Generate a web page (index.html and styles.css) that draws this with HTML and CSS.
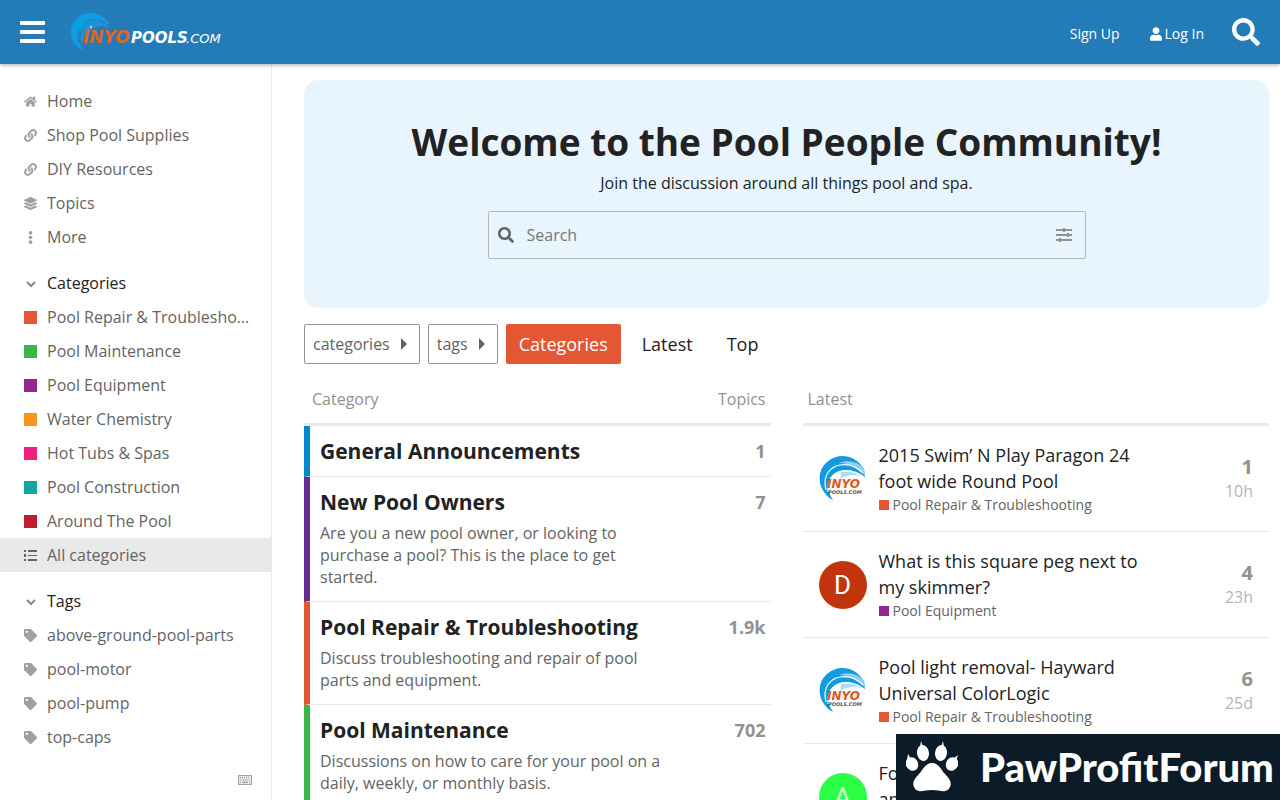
FILE: index.html
```html
<!DOCTYPE html>
<html lang="en">
    <head>
        <meta charset="utf-8">
        <meta name="viewport" content="width=device-width, initial-scale=1">
        <title>Pool People Community</title>
        <link rel="stylesheet" href="styles.css">
    </head>
    <body>
        <svg class="sprite" aria-hidden="true">
            <symbol id="search" viewBox="0 0 512 512"><path d="M505 442.7L405.3 343c-4.5-4.5-10.6-7-17-7H372c27.6-35.3 44-79.7 44-128C416 93.1 322.9 0 208 0S0 93.1 0 208s93.1 208 208 208c48.3 0 92.7-16.4 128-44v16.3c0 6.4 2.5 12.5 7 17l99.7 99.7c9.4 9.4 24.6 9.4 33.9 0l28.3-28.3c9.4-9.4 9.4-24.6.1-34zM208 336c-70.7 0-128-57.2-128-128 0-70.7 57.2-128 128-128 70.7 0 128 57.2 128 128 0 70.7-57.2 128-128 128z"/></symbol>
            <symbol id="user" viewBox="0 0 448 512"><path d="M224 256c70.7 0 128-57.3 128-128S294.7 0 224 0 96 57.3 96 128s57.3 128 128 128zm89.6 32h-16.7c-22.2 10.2-46.9 16-72.9 16s-50.6-5.8-72.9-16h-16.7C60.2 288 0 348.2 0 422.4V464c0 26.5 21.5 48 48 48h352c26.5 0 48-21.5 48-48v-41.6c0-74.2-60.2-134.4-134.4-134.4z"/></symbol>
            <symbol id="bars" viewBox="0 0 26 24"><rect y="1" width="25" height="4" rx="1"/><rect y="10" width="25" height="4" rx="1"/><rect y="19" width="25" height="4" rx="1"/></symbol>
            <symbol id="home" viewBox="0 0 576 512"><path d="M280.37 148.26L96 300.11V464a16 16 0 0 0 16 16l112.06-.29a16 16 0 0 0 15.92-16V368a16 16 0 0 1 16-16h64a16 16 0 0 1 16 16v95.64a16 16 0 0 0 16 16.05L464 480a16 16 0 0 0 16-16V300L295.67 148.26a12.19 12.19 0 0 0-15.3 0zM571.6 251.47L488 182.56V44.05a12 12 0 0 0-12-12h-56a12 12 0 0 0-12 12v72.61L318.47 43a48 48 0 0 0-61 0L4.34 251.47a12 12 0 0 0-1.6 16.9l25.5 31A12 12 0 0 0 45.15 301l235.22-193.74a12.19 12.19 0 0 1 15.3 0L530.9 301a12 12 0 0 0 16.9-1.6l25.5-31a12 12 0 0 0-1.7-16.93z"/></symbol>
            <symbol id="link" viewBox="0 0 512 512"><path d="M326.612 185.391c59.747 59.809 58.927 155.698.36 214.59-.11.12-.24.25-.36.37l-67.2 67.2c-59.27 59.27-155.699 59.262-214.96 0-59.27-59.26-59.27-155.7 0-214.96l37.106-37.106c9.84-9.84 26.786-3.3 27.294 10.606.648 17.722 3.826 35.527 9.69 52.721 1.986 5.822.567 12.262-3.783 16.612l-13.087 13.087c-28.026 28.026-28.905 73.66-1.155 101.96 28.024 28.579 74.086 28.749 102.325.51l67.2-67.19c28.191-28.191 28.073-73.757 0-101.83-3.701-3.694-7.429-6.564-10.341-8.569a16.037 16.037 0 0 1-6.947-12.606c-.396-10.567 3.348-21.456 11.698-29.806l21.054-21.055c5.521-5.521 14.182-6.199 20.584-1.731a152.482 152.482 0 0 1 20.522 17.197zM467.547 44.449c-59.261-59.262-155.69-59.27-214.96 0l-67.2 67.2c-.12.12-.25.25-.36.37-58.566 58.892-59.387 154.781.36 214.59a152.454 152.454 0 0 0 20.521 17.196c6.402 4.468 15.064 3.789 20.584-1.731l21.054-21.055c8.35-8.35 12.094-19.239 11.698-29.806a16.037 16.037 0 0 0-6.947-12.606c-2.912-2.005-6.64-4.875-10.341-8.569-28.073-28.073-28.191-73.639 0-101.83l67.2-67.19c28.239-28.239 74.3-28.069 102.325.51 27.75 28.3 26.872 73.934-1.155 101.96l-13.087 13.087c-4.35 4.35-5.769 10.79-3.783 16.612 5.864 17.194 9.042 34.999 9.69 52.721.509 13.906 17.454 20.446 27.294 10.606l37.106-37.106c59.271-59.259 59.271-155.699.001-214.959z"/></symbol>
            <symbol id="layers" viewBox="0 0 512 512"><path d="M12.41 148.02l232.94 105.67c6.8 3.09 14.49 3.09 21.29 0l232.94-105.67c16.55-7.51 16.55-32.52 0-40.03L266.65 2.31a25.607 25.607 0 0 0-21.29 0L12.41 107.98c-16.55 7.51-16.55 32.53 0 40.04zm487.18 88.28l-58.09-26.33-161.64 73.27c-7.56 3.43-15.59 5.17-23.86 5.17s-16.29-1.74-23.86-5.17L70.51 209.97l-58.1 26.33c-16.55 7.5-16.55 32.5 0 40l232.94 105.59c6.8 3.08 14.49 3.08 21.29 0L499.59 276.3c16.55-7.5 16.55-32.5 0-40zm0 127.8l-57.87-26.23-161.86 73.37c-7.56 3.43-15.59 5.17-23.86 5.17s-16.29-1.74-23.86-5.17L70.29 337.87 12.41 364.1c-16.55 7.5-16.55 32.5 0 40l232.94 105.59c6.8 3.08 14.49 3.08 21.29 0L499.59 404.1c16.55-7.5 16.55-32.5 0-40z"/></symbol>
            <symbol id="dots" viewBox="0 0 512 512"><circle cx="256" cy="72" r="72"/><circle cx="256" cy="256" r="72"/><circle cx="256" cy="440" r="72"/></symbol>
            <symbol id="chevron" viewBox="0 0 13 13"><path d="M3 5l4 4 4-4" fill="none" stroke="currentColor" stroke-width="2"/></symbol>
            <symbol id="list" viewBox="0 0 13 13"><path d="M0 1h2v2H0zM0 5h2v3H0zM0 10h2v2H0zM4 1h9v2H4zM4 6h9v1H4zM4 10h9v2H4z"/></symbol>
            <symbol id="tag" viewBox="0 0 512 512"><path d="M0 252.118V48C0 21.49 21.49 0 48 0h204.118a48 48 0 0 1 33.941 14.059l211.882 211.882c18.745 18.745 18.745 49.137 0 67.882L293.823 497.941c-18.745 18.745-49.137 18.745-67.882 0L14.059 286.059A48 48 0 0 1 0 252.118zM112 64c-26.51 0-48 21.49-48 48s21.49 48 48 48 48-21.49 48-48-21.49-48-48-48z"/></symbol>
            <symbol id="keyboard" viewBox="0 0 14 10"><rect x=".5" y=".5" width="13" height="9" rx="1" fill="none" stroke="currentColor" stroke-width="1.4"/><path d="M2 2.7h10M2.5 4.9h9" fill="none" stroke="currentColor" stroke-width="1.5" stroke-dasharray="1.3 .7"/><path d="M2 6.6h1v1.4H2zM4 6.6h6V8H4zM11 6.6h1V8h-1z"/></symbol>
            <symbol id="sliders" viewBox="0 0 16 16"><path d="M0 2h16v2H0zM0 7h16v2H0zM0 12h16v2H0zM7 1h2v4H7zM11 6h2v4h-2zM3 11h2v4H3z"/></symbol>
            <symbol id="caret" viewBox="0 0 14 14"><path d="M4 1l6 6-6 6z"/></symbol>
            <symbol id="wave" viewBox="0 0 48 48">
                <path d="M14 45C-1 37-4 17 8 7 20-3 36 0 45 14l1 8C35 13 20 13 14 20 7 27 8 36 14 45z" fill="#129be0"/>
                <path d="M20 8c9-4 20-1 25 6l1 7C39 12 29 8 20 8z" fill="#8fd0f2"/>
                <path d="M22 17c8-3 17-1 23 5-8-3-17-3-24 2z" fill="#a9dbf5"/>
                <path d="M7 35C4 24 8 15 17 11c9-3 19-1 27 7M9 37c-1-10 3-17 11-20 8-2 17 0 24 5M11 36c1-8 5-13 11-15" fill="none" stroke="#fff" stroke-width="1.2"/>
            </symbol>
        </svg>

        <header class="header">
            <button class="menu" aria-label="Menu"><svg><use href="#bars"/></svg></button>
            <a class="logo" href="#" aria-label="Inyo Pools">
                <svg viewBox="0 0 152 40">
                    <path d="M13 39C-4 31-4 12 9 4c10-6 22-4 30 9C29 8 18 9 12 16 6 23 7 31 13 39z" fill="#0c9de2"/>
                    <path d="M11 33C7 23 12 14 20 11c8-2 14 0 19 5-8-3-15-2-20 3-5 4-7 8-8 14z" fill="#2a91d0"/>
                    <path d="M8 31C5 21 10 12 18 9c6-2 12-1 16 2" fill="none" stroke="#237cb8" stroke-width="1"/>
                    <circle cx="20" cy="15" r="1" fill="#d5effc"/>
                    <text x="12" y="31" class="logo-inyo">INYO</text>
                    <text x="60" y="31" class="logo-pools">POOLS</text>
                    <text x="115" y="31" class="logo-com">.COM</text>
                </svg>
            </a>
            <nav class="account">
                <a href="#">Sign Up</a>
                <a href="#"><svg><use href="#user"/></svg>Log In</a>
            </nav>
            <button class="find" aria-label="Search"><svg><use href="#search"/></svg></button>
        </header>

        <div class="page">
            <aside class="sidebar">
                <ul>
                    <li><a href="#"><svg><use href="#home"/></svg><span>Home</span></a></li>
                    <li><a href="#"><svg><use href="#link"/></svg><span>Shop Pool Supplies</span></a></li>
                    <li><a href="#"><svg><use href="#link"/></svg><span>DIY Resources</span></a></li>
                    <li><a href="#"><svg><use href="#layers"/></svg><span>Topics</span></a></li>
                    <li><button><svg><use href="#dots"/></svg><span>More</span></button></li>
                </ul>
                <section>
                    <button class="section-title"><svg><use href="#chevron"/></svg><span>Categories</span></button>
                    <ul>
                        <li><a href="#"><i class="swatch repair"></i><span>Pool Repair &amp; Troubleshooting</span></a></li>
                        <li><a href="#"><i class="swatch maintenance"></i><span>Pool Maintenance</span></a></li>
                        <li><a href="#"><i class="swatch equipment"></i><span>Pool Equipment</span></a></li>
                        <li><a href="#"><i class="swatch chemistry"></i><span>Water Chemistry</span></a></li>
                        <li><a href="#"><i class="swatch spas"></i><span>Hot Tubs &amp; Spas</span></a></li>
                        <li><a href="#"><i class="swatch construction"></i><span>Pool Construction</span></a></li>
                        <li><a href="#"><i class="swatch around"></i><span>Around The Pool</span></a></li>
                        <li><a class="active" href="#"><svg><use href="#list"/></svg><span>All categories</span></a></li>
                    </ul>
                </section>
                <section>
                    <button class="section-title"><svg><use href="#chevron"/></svg><span>Tags</span></button>
                    <ul>
                        <li><a href="#"><svg><use href="#tag"/></svg><span>above-ground-pool-parts</span></a></li>
                        <li><a href="#"><svg><use href="#tag"/></svg><span>pool-motor</span></a></li>
                        <li><a href="#"><svg><use href="#tag"/></svg><span>pool-pump</span></a></li>
                        <li><a href="#"><svg><use href="#tag"/></svg><span>top-caps</span></a></li>
                    </ul>
                </section>
                <button class="shortcuts" aria-label="Keyboard shortcuts"><svg><use href="#keyboard"/></svg></button>
            </aside>

            <main class="main">
                <div class="welcome">
                    <h1>Welcome to the Pool People Community!</h1>
                    <p>Join the discussion around all things pool and spa.</p>
                    <form class="search">
                        <svg><use href="#search"/></svg>
                        <input type="text" placeholder="Search" aria-label="Search">
                        <button type="button" aria-label="Advanced search"><svg><use href="#sliders"/></svg></button>
                    </form>
                </div>

                <nav class="filters">
                    <button>categories<svg><use href="#caret"/></svg></button>
                    <button>tags<svg><use href="#caret"/></svg></button>
                    <a class="active" href="#">Categories</a>
                    <a href="#">Latest</a>
                    <a href="#">Top</a>
                </nav>

                <div class="columns">
                    <table class="categories">
                        <thead>
                            <tr><th>Category</th><th class="count">Topics</th></tr>
                        </thead>
                        <tbody>
                            <tr class="row-general">
                                <td><h3><a href="#">General Announcements</a></h3></td>
                                <td class="count">1</td>
                            </tr>
                            <tr class="row-owners">
                                <td>
                                    <h3><a href="#">New Pool Owners</a></h3>
                                    <p>Are you a new pool owner, or looking to purchase a pool? This is the place to get started.</p>
                                </td>
                                <td class="count">7</td>
                            </tr>
                            <tr class="row-repair">
                                <td>
                                    <h3><a href="#">Pool Repair &amp; Troubleshooting</a></h3>
                                    <p>Discuss troubleshooting and repair of pool parts and equipment.</p>
                                </td>
                                <td class="count">1.9k</td>
                            </tr>
                            <tr class="row-maintenance">
                                <td>
                                    <h3><a href="#">Pool Maintenance</a></h3>
                                    <p>Discussions on how to care for your pool on a daily, weekly, or monthly basis.</p>
                                </td>
                                <td class="count">702</td>
                            </tr>
                        </tbody>
                    </table>

                    <div class="latest">
                        <h2>Latest</h2>
                        <div class="topic">
                            <svg class="avatar" viewBox="0 0 48 48">
                                <use href="#wave"/>
                                <text x="8" y="33" class="avatar-name">INYO</text>
                                <text x="9" y="39" class="avatar-sub">POOLS.COM</text>
                            </svg>
                            <div class="topic-text">
                                <a class="title" href="#">2015 Swim’ N Play Paragon 24 foot wide Round Pool</a>
                                <a class="badge" href="#"><i class="repair"></i>Pool Repair &amp; Troubleshooting</a>
                            </div>
                            <div class="stats"><b>1</b><span>10h</span></div>
                        </div>
                        <div class="topic">
                            <span class="avatar letter-d">D</span>
                            <div class="topic-text">
                                <a class="title" href="#">What is this square peg next to my skimmer?</a>
                                <a class="badge" href="#"><i class="equipment"></i>Pool Equipment</a>
                            </div>
                            <div class="stats"><b>4</b><span>23h</span></div>
                        </div>
                        <div class="topic">
                            <svg class="avatar" viewBox="0 0 48 48">
                                <use href="#wave"/>
                                <text x="8" y="33" class="avatar-name">INYO</text>
                                <text x="9" y="39" class="avatar-sub">POOLS.COM</text>
                            </svg>
                            <div class="topic-text">
                                <a class="title" href="#">Pool light removal- Hayward Universal ColorLogic</a>
                                <a class="badge" href="#"><i class="repair"></i>Pool Repair &amp; Troubleshooting</a>
                            </div>
                            <div class="stats"><b>6</b><span>25d</span></div>
                        </div>
                        <div class="topic">
                            <span class="avatar letter-a">A</span>
                            <div class="topic-text">
                                <a class="title" href="#">Fo<br>an</a>
                            </div>
                        </div>
                    </div>
                </div>
            </main>
        </div>

        <div class="watermark">
            <svg viewBox="0 0 52 52">
                <path d="M26 22c7 0 9 7 13 11 5 5 7 9 5 13-3 7-10 3-18 3S11 53 8 46c-2-4 0-8 5-13 4-4 6-11 13-11z"/>
                <ellipse cx="17" cy="12" rx="6" ry="8" transform="rotate(-8 17 12)"/>
                <ellipse cx="35" cy="12" rx="6" ry="8" transform="rotate(8 35 12)"/>
                <ellipse cx="6" cy="23" rx="6" ry="7" transform="rotate(-30 6 23)"/>
                <ellipse cx="46" cy="23" rx="6" ry="7" transform="rotate(30 46 23)"/>
                <path d="M14 6l1-6 2 6zM35 6l2-6 1 6zM1 19l1-6 3 5zM47 18l5-4-2 6z"/>
            </svg>
            <span>PawProfitForum</span>
        </div>
    </body>
</html>
```
FILE: styles.css
```css
* {
    box-sizing: border-box;
}
body {
    margin: 0;
    height: 100vh;
    overflow: hidden;
    display: flex;
    flex-direction: column;
    font: 16px/22px "Open Sans", sans-serif;
    color: #222;
    background: #fff;
}
a {
    color: inherit;
    text-decoration: none;
}
button {
    font: inherit;
    color: inherit;
    background: none;
    border: none;
    padding: 0;
    cursor: pointer;
}
svg {
    fill: currentColor;
    flex-shrink: 0;
    display: block;
}
ul {
    list-style: none;
    margin: 0;
    padding: 0;
}
h1, h2, h3, p {
    margin: 0;
}
.sprite {
    position: absolute;
    width: 0;
    height: 0;
}

/* header */
.header {
    flex-shrink: 0;
    height: 64px;
    padding: 0 20px;
    display: flex;
    align-items: center;
    color: #fff;
    background: #237cb8;
    box-shadow: 0 1px 4px rgba(0, 0, 0, 0.35);
    z-index: 1;
}
.menu svg {
    width: 26px;
    height: 24px;
}
.logo {
    margin-left: 25px;
}
.logo svg {
    width: 152px;
    height: 40px;
}
.logo text {
    font-family: "DejaVu Sans", sans-serif;
    font-style: italic;
}
.logo .logo-inyo {
    font-size: 17px;
    font-weight: bold;
    fill: #e0641f;
}
.logo .logo-pools {
    font-size: 15px;
    font-weight: bold;
    fill: #fff;
}
.logo .logo-com {
    font-size: 13px;
    fill: #fff;
}
.account {
    margin-left: auto;
    padding-top: 4px;
    display: flex;
    gap: 30px;
    font-size: 14px;
}
.account a {
    display: flex;
    align-items: center;
    gap: 3px;
}
.account svg {
    width: 12px;
    height: 14px;
}
.find {
    margin-left: 28px;
}
.find svg {
    width: 28px;
    height: 28px;
}

/* sidebar */
.page {
    flex: 1;
    min-height: 0;
    display: grid;
    grid-template-columns: 272px 1fr;
}
.sidebar {
    padding-top: 20px;
    border-right: 1px solid #e9e9e9;
    display: flex;
    flex-direction: column;
    gap: 12px;
    color: #646464;
}
.sidebar li a, .sidebar li button, .section-title {
    width: 100%;
    height: 34px;
    padding: 0 20px 0 24px;
    display: flex;
    align-items: center;
    gap: 10px;
}
.sidebar svg {
    width: 13px;
    height: 13px;
    color: #a0a0a0;
}
.sidebar span {
    overflow: hidden;
    white-space: nowrap;
    text-overflow: ellipsis;
}
.section-title {
    color: #222;
}
.section-title svg {
    color: #888;
}
.swatch {
    width: 13px;
    height: 13px;
    flex-shrink: 0;
}
.sidebar .active {
    background: #e9e9e9;
}
.sidebar .active svg {
    color: #646464;
}
.repair { background: #e45735; }
.maintenance { background: #3ab54a; }
.equipment { background: #92278f; }
.chemistry { background: #f7941d; }
.spas { background: #ed207b; }
.construction { background: #12a89d; }
.around { background: #bf1e2e; }
.sidebar .shortcuts {
    margin: auto 19px 15px auto;
}
.sidebar .shortcuts svg {
    width: 14px;
    height: 10px;
}

/* content */
.main {
    min-width: 0;
    overflow: hidden;
    padding: 16px 11px 0 32px;
}
.welcome {
    padding: 37px 16px 49px;
    border-radius: 15px;
    background: #e8f5ff;
    text-align: center;
}
.welcome h1 {
    font-size: 37px;
    line-height: 50px;
}
.welcome p {
    margin-top: 5px;
}
.search {
    max-width: 598px;
    height: 48px;
    margin: 17px auto 0;
    padding: 0 13px 0 9px;
    display: flex;
    align-items: center;
    gap: 13px;
    border: 1px solid #b4b8bb;
    border-radius: 2px;
    color: #646464;
}
.search input {
    flex: 1;
    min-width: 0;
    padding: 0;
    border: none;
    outline: none;
    background: none;
    font: inherit;
}
.search input::placeholder {
    color: #777;
}
.search svg {
    width: 16px;
    height: 16px;
}
.search button {
    color: #919191;
}
.filters {
    margin-top: 16px;
    display: flex;
    gap: 8px;
}
.filters button, .filters a {
    height: 40px;
    display: flex;
    align-items: center;
    border-radius: 2px;
}
.filters button {
    padding: 0 8px;
    gap: 7px;
    border: 1px solid #919191;
    color: #646464;
}
.filters button svg {
    width: 14px;
    height: 14px;
}
.filters a {
    padding: 0 13px;
    font-size: 18px;
}
.filters .active {
    color: #fff;
    background: #e45735;
}
.columns {
    margin-top: 11px;
    display: grid;
    grid-template-columns: 1fr 1fr;
    gap: 32px;
    align-items: start;
}

.categories {
    width: 100%;
    border-spacing: 0;
}
.categories th, .latest h2 {
    height: 51px;
    padding: 0 8px;
    border-bottom: 3px solid #e9e9e9;
    font-size: 16px;
    font-weight: normal;
    text-align: left;
    color: #919191;
}
.categories td {
    padding: 10px;
    border-bottom: 1px solid #e9e9e9;
    vertical-align: top;
}
.categories td:first-child {
    border-left: 6px solid;
    padding-right: 16px;
}
.categories h3 {
    font-size: 21px;
    line-height: 30px;
    color: #222;
}
.categories p {
    margin: 5px 0 3px;
    color: #646464;
}
.categories .count {
    width: 90px;
    padding-left: 0;
    padding-right: 5px;
    text-align: right;
}
.categories td.count {
    font-size: 18px;
    line-height: 30px;
    font-weight: bold;
    color: #919191;
}
.categories .row-general td:first-child { border-left-color: #0088cc; }
.categories .row-owners td:first-child { border-left-color: #652d90; }
.categories .row-repair td:first-child { border-left-color: #e45735; }
.categories .row-maintenance td:first-child { border-left-color: #3ab54a; }

.latest h2 {
    padding: 0 5px;
    line-height: 48px;
}
.topic {
    padding: 16px 16px 15px;
    display: flex;
    align-items: center;
    border-bottom: 1px solid #e9e9e9;
}
.avatar {
    width: 48px;
    height: 48px;
    flex-shrink: 0;
    border-radius: 50%;
}
.avatar-name {
    font: italic bold 12px "DejaVu Sans", sans-serif;
    fill: #d95a1b;
}
.avatar-sub {
    font: italic bold 5px "DejaVu Sans", sans-serif;
    fill: #555;
}
.letter-d, .letter-a {
    font: 26px/48px Roboto, sans-serif;
    text-align: center;
    color: #fff;
}
.letter-d { background: #c0350c; }
.letter-a { background: #2aff45; color: #d4ffda; }
.topic-text {
    flex: 1;
    min-width: 0;
    min-height: 74px;
    padding: 0 60px 0 12px;
}
.title {
    display: block;
    font-size: 18px;
    line-height: 26px;
}
.badge {
    display: flex;
    align-items: center;
    gap: 4px;
    font-size: 14px;
    color: #646464;
}
.badge i {
    width: 10px;
    height: 10px;
}
.stats {
    display: flex;
    flex-direction: column;
    text-align: right;
    line-height: 25px;
    color: #b5b5b5;
}
.stats b {
    font-size: 20px;
    color: #919191;
}

/* banner in the corner */
.watermark {
    position: fixed;
    right: 0;
    bottom: 0;
    width: 384px;
    height: 66px;
    padding-left: 10px;
    display: flex;
    align-items: center;
    gap: 22px;
    color: #fff;
    background: #0b1b27;
    font: 900 40px/60px Lato, sans-serif;
    z-index: 2;
}
.watermark svg {
    width: 52px;
    height: 52px;
}
```
